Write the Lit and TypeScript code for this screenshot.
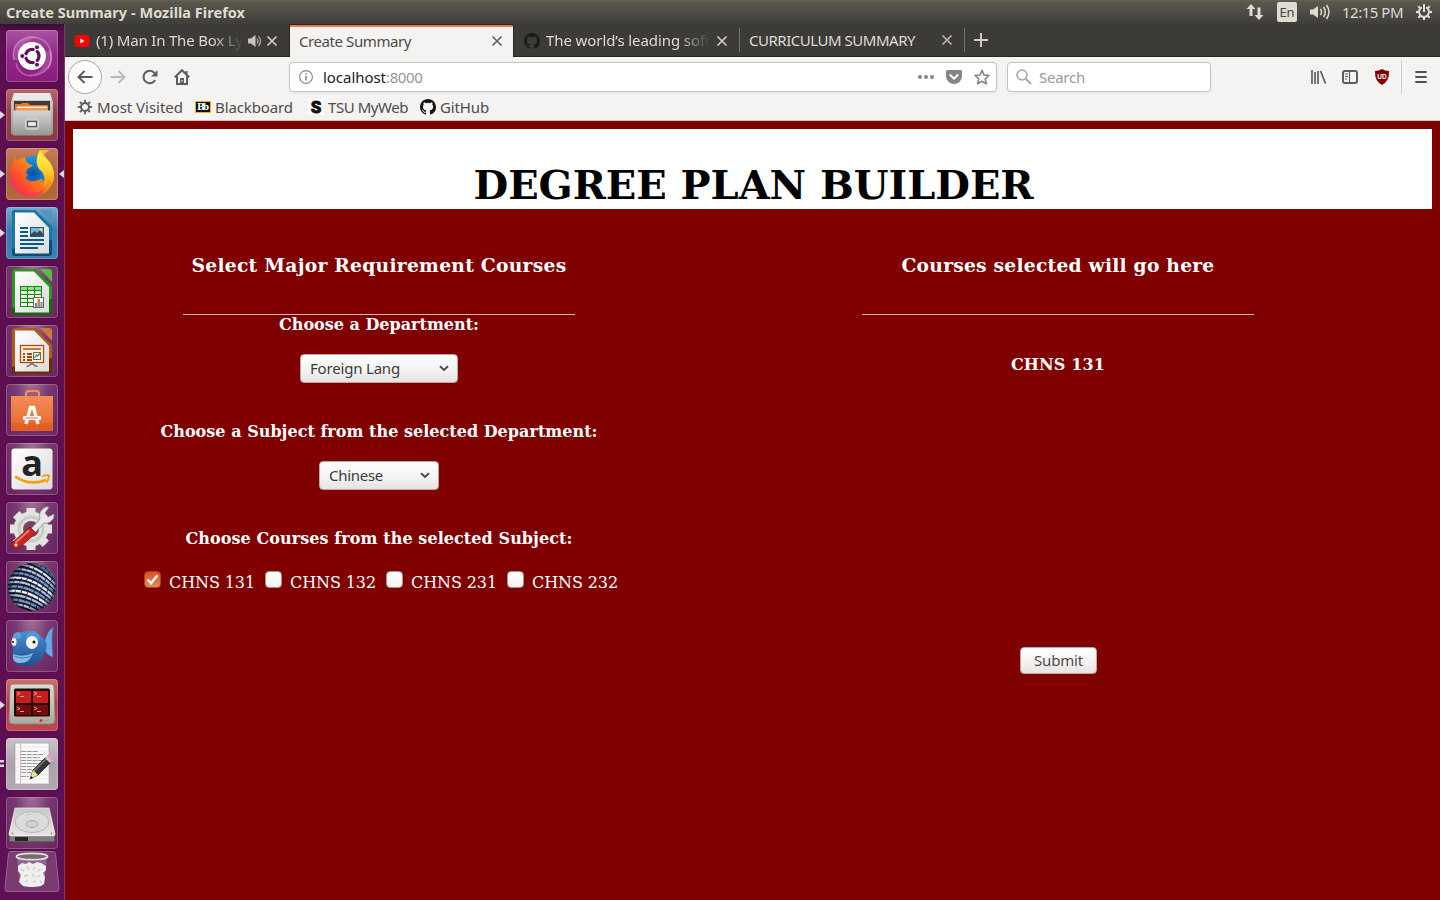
import { LitElement, html, svg, css } from "lit";
import { customElement, property } from "lit/decorators.js";

/* One line of text whose tracking is computed so that it fills a given width. */
@customElement("fit-text")
class FitText extends LitElement {
  @property({ type: Number }) w = 0;
  @property() text = "";
  static styles = css`
    :host { display: inline-block; white-space: pre; }
    .run { display: inline-block; }
  `;
  firstUpdated() {
    const run = this.renderRoot.querySelector(".run") as HTMLElement;
    const natural = run.getBoundingClientRect().width;
    run.style.letterSpacing = `${(this.w - natural) / this.text.length}px`;
  }
  render() {
    return html`<span class="run">${this.text}</span>`;
  }
}

const t = (text: string, w: number) => html`<fit-text .text=${text} .w=${w}></fit-text>`;

const octocat = (fill: string) => html`<svg width="16" height="16" viewBox="0 0 16 16"><path fill=${fill} d="M8 0C3.58 0 0 3.58 0 8c0 3.54 2.29 6.53 5.47 7.59.4.07.55-.17.55-.38 0-.19-.01-.82-.01-1.49-2.01.37-2.53-.49-2.69-.94-.09-.23-.48-.94-.82-1.13-.28-.15-.68-.52-.01-.53.63-.01 1.08.58 1.23.82.72 1.21 1.87.87 2.33.66.07-.52.28-.87.51-1.07-1.78-.2-3.64-.89-3.64-3.95 0-.87.31-1.59.82-2.15-.08-.2-.36-1.02.08-2.12 0 0 .67-.21 2.2.82a7.6 7.6 0 0 1 4 0c1.53-1.04 2.2-.82 2.2-.82.44 1.1.16 1.92.08 2.12.51.56.82 1.27.82 2.15 0 3.07-1.87 3.75-3.65 3.95.29.25.54.73.54 1.48 0 1.07-.01 1.93-.01 2.2 0 .21.15.46.55.38A8.01 8.01 0 0 0 16 8c0-4.42-3.58-8-8-8z"/></svg>`;
const close = (c: string) => html`<svg width="12" height="12" viewBox="0 0 12 12"><path d="M1.5 1.5l9 9M10.5 1.5l-9 9" stroke=${c} stroke-width="1.6" fill="none"/></svg>`;
const speaker = html`<svg width="14" height="14" viewBox="0 0 14 14"><path fill="#c9c5bd" d="M0 4.500h3L7.500 1v12L3 9.500H0z"/><path d="M9 4.500q1.800 2.500 0 5M10.500 2q4 5 0 10" stroke="#b9b5ad" stroke-width="1.200" fill="none"/></svg>`;

const spokes = (r: number, cx: number, cy: number, len: number, w: number, c: string) =>
  svg`${[0, 45, 90, 135, 180, 225, 270, 315].map(
    (a) => svg`<rect x=${cx - w / 2} y=${cy - r - len} width=${w} height=${len + 1} fill=${c} transform=${`rotate(${a} ${cx} ${cy})`} />`
  )}`;

const officeDoc = (c1: string, c2: string, corner: string, body: unknown) => svg`
  <path d="M9 3h20l17 17v26a3 3 0 0 1-3 3H9a3 3 0 0 1-3-3V6a3 3 0 0 1 3-3z" fill=${c2}/>
  <path d="M9 3h20l17 17v13L6 42V6a3 3 0 0 1 3-3z" fill=${c1}/>
  <path d="M9 5.500h19L43 21v25.500H9z" fill="url(#paper)"/>
  <path d="M34 3h9a3 3 0 0 1 3 3v10z" fill=${corner}/>
  ${body}`;

const icons = {
  dash: svg`
    <path d="M8 30C4 14 18 4 32 8C46 12 48 28 42 38" stroke="#dba3d3" stroke-opacity=".55" stroke-width="1.500" fill="none"/>
    <path d="M44 20C50 38 34 48 20 45C14 43 11 38 10 33" stroke="#dba3d3" stroke-opacity=".45" stroke-width="1.500" fill="none"/>
    <path d="M8 30C4 14 18 4 32 8C22 8 12 16 14 30zM44 20C50 38 34 48 20 45C32 45 42 36 40 22z" fill="#fff" fill-opacity=".16"/>
    <circle cx="26" cy="26" r="14" fill="#fff"/>
    <circle cx="26.300" cy="26" r="6.700" fill="none" stroke="#641255" stroke-width="3.300"/>
    <path d="M26 26L15.500 26M26 26L31.500 16.500M26 26L31.500 35.500" stroke="#fff" stroke-width="1.500"/>
    <circle cx="26.300" cy="26" r="4.900" fill="#fff"/>
    <g fill="#641255" stroke="#fff" stroke-width="1"><circle cx="16.300" cy="26" r="2.500"/><circle cx="31" cy="17.300" r="2.500"/><circle cx="31" cy="34.700" r="2.500"/></g>`,
  files: svg`
    <path d="M8 4h36l3 9v32H5V13z" fill="url(#metal)"/>
    <path d="M8 4h36l2 7H6z" fill="#e9e9e7"/>
    <rect x="8" y="12" width="36" height="14" fill="#3e3b38"/>
    <path d="M9 15h6l1-1h6l2 2h18v7H9z" fill="#e3792f"/><path d="M11 17.500h30v4H11z" fill="#fff0dc"/><path d="M10 19h32v4H10z" fill="#ef974e"/>
    <path d="M7 21.500h38v25H7z" fill="url(#metal)"/>
    <rect x="19.500" y="30" width="13" height="10" rx="2" fill="#bbb" stroke="#dedede"/>
    <rect x="21.500" y="32.500" width="9" height="5" fill="#eee" stroke="#5b5b5b" stroke-width="1.300"/>`,
  firefox: svg`
    <circle cx="27" cy="26" r="18" fill="url(#ffblue)"/>
    <path d="M34 2c3 4 4 6 7 9c7 7 9 17 5 25C41 46 32 49 25 49C12 48 4 39 4 27C4 20 6 14 9 8c0 3 1 4 2 5c3-3 6-4 8-4c0 3 1 5 4 7l4 1c-2 3-6 3-6 5c-2 2-1 4 1 5c-4 2-2 5 2 6c5 1 8-1 11-2c2 0 2 2-1 3c4 0 8-4 8-9c0-6-5-7-6-12c0-5 4-9 8-11z" fill="url(#fffire)"/>
    <path d="M34 2c3 4 4 6 7 9c7 7 9 17 5 25c-1-2-2-4-4-5c0 3-1 6-4 8c2-8 0-14-4-17c-4-4-5-11 0-20z" fill="url(#ffyellow)"/>
    <path d="M4 27c2 10 8 16 17 18c7 1 14-1 18-6c-2 8-9 11-14 10C12 48 4 39 4 27z" fill="#f5326c" fill-opacity=".55"/>`,
  writer: officeDoc("#1777ab", "#084c78", "#5294bb", svg`
    <g fill="#075c8c"><path d="M14 20h8v2h-8zM14 24h8v2h-8zM14 28h8v2h-8zM14 32h24v2H14zM14 36h24v2H14zM14 40h18v2H14z"/></g>
    <rect x="24.500" y="20.500" width="13" height="9" fill="#78b9dc" stroke="#075c8c"/><path d="M25 29v-2l4-3l2 2l3-3l3 4v2z" fill="#34495a"/><circle cx="35" cy="22.500" r="1.500" fill="#ffd24a"/>`),
  calc: officeDoc("#2b9a1c", "#0d6c0c", "#58bd45", svg`
    <rect x="14.500" y="20.500" width="21" height="20" fill="#e7f9df" stroke="#128b12"/><rect x="15" y="21" width="20" height="4" fill="#94df85"/>
    <path d="M21.500 20v20M28.500 20v20M15 24.500h20M15 28.500h20M15 32.500h20M15 36.500h20" stroke="#128b12" fill="none"/>
    <rect x="27.500" y="31.500" width="10" height="10" fill="#fff" stroke="#666"/><path d="M29 37h2v4h-2z" fill="#3798d4"/><path d="M31.500 33h2.500v8h-2.500z" fill="#e87926"/><path d="M34.500 36h2v5h-2z" fill="#3798d4"/>`),
  impress: officeDoc("#b55a1c", "#6e2d06", "#c8793c", svg`
    <rect x="14.500" y="20.500" width="23" height="17" fill="#fff1e4" stroke="#b14b12" stroke-width="1.300"/>
    <path d="M17 23h18v2H17z" fill="#d9722e"/><path d="M17 28h2v2h-2zM17 31h2v2h-2zM17 34h2v2h-2zM21 28h5v2h-5zM21 31h5v2h-5zM21 34h5v2h-5z" fill="#a44412"/>
    <rect x="27.500" y="27.500" width="7" height="7" fill="#fff" stroke="#666"/><path d="M28.500 33l2-3l1 1l3-3" stroke="#329d29" fill="none" stroke-width="1.300"/>
    <path d="M26 38v1M24.500 39.500q-1.500 1.500-4 2M27.500 39.500q1.500 1.500 4 2M24 39h4" stroke="#777" stroke-width="1.700" fill="none"/>`),
  software: svg`
    <path d="M20 17V9q0-3 3-3h7q3 0 3 3v8" stroke="#b85a38" stroke-width="2.600" fill="none"/>
    <path d="M5 12h42v35H5z" fill="url(#bag)"/><path d="M5 39h42v8H5z" fill="#dc5a1c" fill-opacity=".55"/>
    <path d="M20 17V10q0-3 3-3h7q3 0 3 3v7" stroke="#f1936a" stroke-width="2" fill="none"/>
    <g stroke="#fff" stroke-width="3.300" fill="none"><path d="M20 40l4.500-16.500h3L32 40"/></g>
    <rect x="17" y="32" width="18" height="4" rx="1" fill="#fff"/><path d="M19 34h13" stroke="#ee713b" stroke-width="1"/>`,
  amazon: svg`
    <rect x="5.500" y="5.500" width="41" height="41" rx="3" fill="url(#paper)"/>
    <text x="26" y="33" text-anchor="middle" class="amz">a</text>
    <path d="M9 33.500q15 10 31 3.500" stroke="#f90" stroke-width="2.600" fill="none"/><path d="M36 33.500q5-2 7-1q0 4-2.500 7" stroke="#f90" stroke-width="1.800" fill="none"/>`,
  settings: svg`
    ${spokes(16, 25, 27, 5, 9, "#e3e3e1")}
    <circle cx="25" cy="27" r="17.500" fill="#e3e3e1"/><circle cx="25" cy="27" r="12" fill="none" stroke="#cacac8" stroke-width="3"/>
    <circle cx="25" cy="27" r="8" fill="#744467"/>
    <path d="M22 30L34 17q-2-7 4-11q3-2 5-1l-4 6l3 4l6-3q1 5-4 8q-3 2-6 1L26 34z" fill="#e8e8e8" stroke="#8d8d8b" stroke-width=".800"/>
    <path d="M24 25l6 6L13 46q-4 2-6-1q-2-2 0-5z" fill="#c82424" stroke="#8b1414" stroke-width=".800"/><path d="M23 28.500L9.500 40.500" stroke="#ef7773" stroke-width="2"/><circle cx="10" cy="43" r="1.400" fill="#fff"/>`,
  sphere: svg`
    <clipPath id="ball"><circle cx="26" cy="26" r="24"/></clipPath>
    <circle cx="26" cy="26" r="24" fill="#131a2b"/>
    <g clip-path="url(#ball)" fill="none">
      ${[0, 1, 2, 3, 4, 5, 6, 7, 8, 9, 10, 11, 12].map((i) => svg`<path d=${`M-4 ${2 + i * 4.2}Q${28 - i * 1.2} ${-10 + i * 4.9} ${56 - i * 1.4} ${26 + i * 3.1}`} stroke=${["#7f9ad0", "#f2f6ff", "#b9c9e6"][i % 3]} stroke-width="2.300"/>`)}
      ${[0, 1, 2, 3, 4].map((i) => svg`<path d=${`M${24 + i * 6} ${-1 + i}Q${46 + i * 2} ${8 + i * 3} ${54 + i} ${22 + i * 4}`} stroke=${i % 2 ? "#6f8cc6" : "#dbe6fb"} stroke-width="1.600"/>`)}
      ${[0, 1, 2, 3, 4, 5, 6, 7, 8].map((i) => svg`<path d=${`M${-6 + i * 7} 54Q${4 + i * 6} 20 ${24 + i * 6} -4`} stroke="#141c30" stroke-width=".900" stroke-dasharray="5 2"/>`)}
    </g><circle cx="26" cy="26" r="24" fill="url(#shade)"/>`,
  fish: svg`
    <path d="M38 24q3-13 9-17q-1 7-1 13q0 9 1 17q-6-1-9-9z" fill="#6ca8df" stroke="#367abc" stroke-width=".600"/>
    <path d="M7 24Q11 10 24 11q11 1 17 13q-2 15-12 20q-12 5-20-1q-3-3-2-10z" fill="url(#fishbody)"/>
    <path d="M6 20q1-9 7-8q3 1 2 6z" fill="#5d9bd5"/><ellipse cx="8" cy="22" rx="2.500" ry="4" fill="#eee"/><circle cx="7" cy="22" r="1" fill="#111"/>
    <circle cx="26.500" cy="18" r="7" fill="#5796d4"/><ellipse cx="26" cy="22.500" rx="6" ry="6.500" fill="#f5f4ef"/><circle cx="28" cy="22" r="1.500" fill="#111"/>
    <path d="M7 34q10 4 20-1q-3 10-13 10q-6 0-7-5z" fill="#88b8e3"/><path d="M8 36q9 4 17 0" stroke="#4481bb" fill="none"/>`,
  terminator: svg`
    <path d="M7 5h38q3 0 3 3l1 33q0 4-4 4H7q-4 0-4-4L4 8q0-3 3-3z" fill="url(#bezel)" stroke="#85857d"/>
    <rect x="8" y="9.500" width="36" height="28" rx="1.500" fill="#220605"/>
    <path d="M10 12h15v12H10zM27 12h15v12H27z" fill="#ca1d20"/><path d="M10 26h15v10H10zM27 26h15v10H27z" fill="#760b0d"/>
    <g stroke="#fbb" fill="none" stroke-width=".800"><path d="M11 13l3 1.500l-3 1.500M14 17.500h4M28 13l3 1.500l-3 1.500M31 17.500h4M11 28l3 1.500l-3 1.500M14 32.500h4M28 28l3 1.500l-3 1.500M31 32.500h4"/></g>
    <circle cx="35" cy="41.500" r="1.500" fill="#e22"/><path d="M38 41.500h4" stroke="#999"/>`,
  gedit: svg`
    <path d="M9 5h34v41H9z" fill="#fafaf8" stroke="#aaa" stroke-width=".800"/><path d="M14.500 5v41" stroke="#f1aaa9"/><path d="M10 9h32M10 13h32M10 17h32M10 21h32M10 25h32M10 29h32M10 33h32M10 37h32M10 41h32" stroke="#dce6f0" stroke-width=".800"/>
    <path d="M15 13.500h17M15 16.500h22M15 19.500h19M15 22.500h22M15 25.500h20M15 28.500h14M15 31.500h15M15 34.500h10M15 38.500h8" stroke="#9a9a9a" stroke-width="1" stroke-dasharray="5 .8"/>
    <path d="M24 41l3-9l13-13l5 5L32 37z" fill="#36383b" stroke="#151515" stroke-width=".700"/><path d="M28 33L41 20" stroke="#777" stroke-width="1.500"/>
    <path d="M24 41l3-9l5 5z" fill="#f1de8d"/><path d="M24 41l1-3l2 2z" fill="#111"/><path d="M39 20l3-3l5 5l-3 3z" fill="#ccc"/><path d="M41 18q3-3 5 0q3 2 0 5z" fill="#e696c5"/>`,
  disk: svg`
    <path d="M9 11h34l6 26v7q0 1-1 1H4q-1 0-1-1v-7z" fill="#5d5f5c"/><path d="M9 11h34l6 26q0 2-2 2H5q-2 0-2-2z" fill="url(#metal2)" stroke="#f5f5f3" stroke-width=".700"/>
    <ellipse cx="26" cy="25" rx="17" ry="10.500" fill="#dcdcda" stroke="#b5b5b3"/><ellipse cx="26" cy="27" rx="6" ry="3.500" fill="#d1d1cf" stroke="#aaa"/><path d="M20 18q8-1 10-5" stroke="#c4c4c2" fill="none"/>
    <path d="M4 40h44v4H4z" fill="#7e807d"/><path d="M9 40h13v4H9z" fill="#252726"/><g fill="#888"><circle cx="6.500" cy="36.500" r=".9"/><circle cx="45.500" cy="36.500" r=".9"/></g>`,
};

/* Gradients are repeated in every tile so that each icon resolves its own fills. */
const tileDefs = svg`<defs>
  <linearGradient id="paper" x2="1" y2="1"><stop stop-color="#fff"/><stop offset="1" stop-color="#dadada"/></linearGradient>
  <linearGradient id="metal" x2="0" y2="1"><stop stop-color="#d5d5d3"/><stop offset="1" stop-color="#969694"/></linearGradient>
  <linearGradient id="metal2" x2="0" y2="1"><stop stop-color="#c8c8c6"/><stop offset="1" stop-color="#e6e6e4"/></linearGradient>
  <linearGradient id="bezel" x2="0" y2="1"><stop stop-color="#dddcd4"/><stop offset="1" stop-color="#aaa99f"/></linearGradient>
  <linearGradient id="bag" x2="0" y2="1"><stop stop-color="#f28d58"/><stop offset="1" stop-color="#e9652a"/></linearGradient>
  <radialGradient id="ffblue"><stop stop-color="#0a4f9f"/><stop offset=".6" stop-color="#1482cf"/><stop offset="1" stop-color="#1c97e0"/></radialGradient>
  <linearGradient id="fffire" x1="1" y1="0" x2="0" y2=".9"><stop stop-color="#ffd02b"/><stop offset=".45" stop-color="#ff8b16"/><stop offset=".8" stop-color="#fb4232"/><stop offset="1" stop-color="#e5287c"/></linearGradient>
  <linearGradient id="ffyellow" x2="0" y2="1"><stop stop-color="#fff44f"/><stop offset=".5" stop-color="#ffd52f"/><stop offset="1" stop-color="#ff980e"/></linearGradient>
  <linearGradient id="fishbody" x2="0" y2="1"><stop stop-color="#4c8fd0"/><stop offset="1" stop-color="#1b4f91"/></linearGradient>
  <radialGradient id="shade"><stop stop-color="#fff" stop-opacity="0"/><stop offset=".8" stop-color="#102040" stop-opacity=".1"/><stop offset="1" stop-color="#050a18" stop-opacity=".65"/></radialGradient>
</defs>`;

const tiles: [string, unknown, string][] = [
  ["dash", icons.dash, ""],
  ["red", icons.files, "l"],
  ["orange", icons.firefox, "lr"],
  ["blue", icons.writer, "l"],
  ["plain", icons.calc, ""],
  ["plain", icons.impress, ""],
  ["plain", icons.software, ""],
  ["plain", icons.amazon, ""],
  ["plain", icons.settings, ""],
  ["plain", icons.sphere, ""],
  ["plain", icons.fish, ""],
  ["crimson", icons.terminator, "l"],
  ["grey", icons.gedit, "d"],
  ["plain", icons.disk, ""],
];

@customElement("unity-launcher")
class UnityLauncher extends LitElement {
  static styles = css`
    :host { display: flex; flex-direction: column; gap: 7px; width: 64px; box-sizing: content-box; border-right: 1px solid #7d3b73; padding-top: 6px; background: linear-gradient(#390a33 0, #5c0e50 8px, #5f1054 100%); overflow: hidden; }
    .row { display: grid; grid-template-columns: 6px 52px 6px; height: 52px; flex: none; align-items: center; }
    .tile { box-sizing: border-box; width: 52px; height: 52px; border-radius: 4px; box-shadow: inset 0 0 0 1px rgba(255, 255, 255, .22), 0 0 2px rgba(0, 0, 0, .25); }
    .tile svg { display: block; overflow: visible; }
    .dash { background: linear-gradient(#a8559f, #942889 45%, #8a1c7c); }
    .plain { background: radial-gradient(ellipse at 50% -10%, #a57a9b 0, #7a3a70 45%, #69215f 100%); }
    .red { background: linear-gradient(#b7666a, #95404a 45%, #8b3a47); }
    .orange { background: linear-gradient(#c47f5a, #ad623b 50%, #b2693d); }
    .blue { background: linear-gradient(#76a9cc, #3c7cae 45%, #3f80b2); }
    .crimson { background: linear-gradient(#d16d6d, #b83a40 50%, #c04648); }
    .grey { background: linear-gradient(#cac3ca, #ada1ac 50%, #b5aab4); }
    .amz { font: bold 36px/36px "Open Sans", "Noto Sans", sans-serif; fill: #232323; }
    .mark { display: block; fill: #ddd8de; }
    .trash { margin-top: -5px; display: block; flex: none; }
  `;
  render() {
    return html`${tiles.map(
        ([kind, icon, marks]) => html`<div class="row">
          <svg class="mark" width="6" height="10" viewBox="0 0 6 10">
            ${marks.includes("l") ? svg`<path d="M0 1l5 4l-5 4z"/>` : ""}
            ${marks === "d" ? svg`<path d="M0 1h4v2.500H0zM0 5.500h4V8H0z"/>` : ""}
          </svg>
          <div class="tile ${kind}"><svg width="52" height="52" viewBox="0 0 52 52">${tileDefs}${icon}</svg></div>
          <svg class="mark" width="6" height="10" viewBox="0 0 6 10">${marks.includes("r") ? svg`<path d="M6 1l-5 4l5 4z"/>` : ""}</svg>
        </div>`
      )}
      <svg class="trash" width="64" height="44" viewBox="0 0 64 44">
        <path d="M11 .500h42q2 0 2.500 2l3.500 35q0 3-2 3H7q-2.500 0-2-3l3.500-35Q9 .500 11 .500z" fill="#793b70" stroke="#97628f"/>
        <path d="M17 6l3 27q12 5 24 0l3-27z" fill="#bbb6bc" fill-opacity=".35"/>
        <path d="M18 15l4-3l4 1l3-2l4 2l4-2l4 1l5 3l0 4l-3 3l2 4l-1 7l-3 2q-9 2-18 0l-4-4l2-7l-3-4z" fill="#f0efee"/>
        <path d="M21 18l3 2M27 15l2 4M35 16l-2 3M41 18l-3 2M24 25l4-1M32 23l3 3M40 25l-3 1M25 31l3-2M33 31l3-1M40 30l2 2" stroke="#c9c8c7" stroke-width="1.300" fill="none"/>
        <ellipse cx="32" cy="5.500" rx="15.500" ry="3.200" fill="#77696f" stroke="#dededd" stroke-width="1.800"/>
      </svg>`;
  }
}

@customElement("firefox-chrome")
class FirefoxChrome extends LitElement {
  static styles = css`
    :host { display: block; font: 15px/20px "Noto Sans", sans-serif; color: #4c4c4c; }
    svg { display: block; flex: none; }
    .tabs { display: grid; grid-template-columns: 224px 225px 225px 225px 1fr; height: 33px; box-sizing: border-box; background: #3c3b37; color: #dfdbd2; }
    .tab { display: flex; align-items: center; height: 33px; box-sizing: border-box; border-bottom: 1px solid #272623; padding: 2px 11px 1px 9px; overflow: hidden; }
    .tab .close { margin-left: auto; }
    .clip { overflow: hidden; height: 21px; margin-top: -1px; -webkit-mask-image: linear-gradient(90deg, #000 calc(100% - 32px), transparent); }
    .active { background: #f4f3f2; color: #4c4c4c; border: 1px solid #272623; border-bottom: 0; box-shadow: inset 0 2px #f0774a; padding: 0 10px 1px 9px; }
    .clip1 { width: 148px; margin-left: 6px; margin-right: 4px; }
    .clip2 { width: 164px; margin-left: 6px; }
    .sep { width: 1px; height: 24px; background: #75736d; }
    .third { padding-left: 10px; }
    .fourth { padding-left: 0; padding-top: 0; }
    .fourth fit-text { margin-left: 9px; }
    .new { padding-left: 0; padding-top: 0; }
    .plus { margin-left: 8px; }
    .nav { display: grid; grid-template-columns: 3px 34px 8px 16px 16px 16px 16px 16px 99px 708px 10px 204px 98px 18px 14px 18px 14px 18px 10px 1px 12px 1fr; align-items: center; height: 39px; background: #f4f3f2; padding-top: 1px; box-sizing: border-box; }
    .back { box-sizing: border-box; width: 34px; height: 34px; border: 1px solid #aaa8a6; border-radius: 50%; background: #fcfcfc; display: grid; place-items: center; }
    .box { box-sizing: border-box; height: 30px; border: 1px solid #c6c3c0; border-radius: 4px; background: #fff; display: flex; align-items: center; box-shadow: 0 1px 3px rgba(0, 0, 0, .06); }
    .url { padding: 0 6px 0 9px; color: #222; }
    .url .host { margin-left: 10px; }
    .url .port { color: #959595; }
    .url .dots { margin-left: auto; margin-right: 12px; }
    .url .pocket { margin-right: 12px; }
    .search { padding-left: 8px; gap: 7px; color: #9a9a9a; }
    .rule { width: 1px; height: 34px; background: #d4d2d0; }
    .marks { display: flex; align-items: center; height: 25px; box-sizing: border-box; border-bottom: 1px solid #c9c6c3; background: #f4f3f2; padding: 0 0 2px 12px; }
    .marks svg { margin-right: 4px; }
    .marks .m2 { margin-left: 12px; }
    .marks .m3 { margin-left: 15px; overflow: visible; }
    .tiny { font: bold 9px "DejaVu Serif", serif; fill: #fff; }
    .ess { font: 900 17px Roboto, sans-serif; fill: #111; stroke: #111; stroke-width: .8px; }
    .ud { font: bold 6.5px "Liberation Sans", sans-serif; fill: #fff; }
  `;
  render() {
    return html`
      <div class="tabs">
        <div class="tab first">
          <svg width="16" height="12" viewBox="0 0 16 12"><rect x=".500" width="15" height="12" rx="3" fill="#f00"/><path d="M6.300 3.500v5l4.200-2.500z" fill="#fff"/></svg>
          <div class="clip clip1">${t("(1) Man In The Box Lyr", 153)}</div>
          ${speaker}
          <span class="close">${close("#d5d1c9")}</span>
        </div>
        <div class="tab active">${t("Create Summary", 112)}<span class="close">${close("#5d5d5d")}</span></div>
        <div class="tab third">${octocat("#1c1b19")}<div class="clip clip2">${t("The world’s leading softw", 176)}</div><span class="close">${close("#d5d1c9")}</span></div>
        <div class="tab fourth"><div class="sep"></div>${t("CURRICULUM SUMMARY", 166)}<span class="close">${close("#bdb9b2")}</span></div>
        <div class="tab new"><div class="sep"></div><svg class="plus" width="16" height="16" viewBox="0 0 16 16"><path d="M8 1v14M1 8h14" stroke="#d5d1c9" stroke-width="1.900"/></svg></div>
      </div>
      <div class="nav">
        <i></i>
        <div class="back"><svg width="16" height="16" viewBox="0 0 16 16"><path d="M15.500 8H1.500M7.500 2L1.500 8L7.500 14" stroke="#585858" stroke-width="1.900" fill="none"/></svg></div>
        <i></i>
        <svg width="16" height="16" viewBox="0 0 16 16"><path d="M.500 8H14.500M8.500 2L14.500 8L8.500 14" stroke="#bcbab9" stroke-width="1.900" fill="none"/></svg>
        <i></i>
        <svg width="16" height="16" viewBox="0 0 16 16"><path d="M13.200 11A6.200 6.200 0 1 1 12.500 4" stroke="#5e5e5e" stroke-width="2" fill="none"/><path d="M15.500 1v6.500H9z" fill="#5e5e5e"/></svg>
        <i></i>
        <svg width="16" height="16" viewBox="0 0 16 16"><path d="M.800 8.200L8 1.200l7.200 7M3 7v8h10V7M12.500 2v3" stroke="#5e5e5e" stroke-width="2" fill="none"/><path d="M6 9h4v6H6z" fill="#5e5e5e"/><path d="M7.500 11h1v2h-1z" fill="#f4f3f2"/></svg>
        <i></i>
        <div class="box url">
          <svg width="14" height="14" viewBox="0 0 14 14"><circle cx="7" cy="7" r="6.400" fill="none" stroke="#858585" stroke-width="1.100"/><path d="M6.200 6h1.600v4.500H6.200zM6.200 3.200h1.600v1.600H6.200z" fill="#858585"/></svg>
          <span class="host">${t("localhost", 63)}</span><span class="port">${t(":8000", 36.5)}</span>
          <svg class="dots" width="16" height="16" viewBox="0 0 16 16"><g fill="#858585"><circle cx="2" cy="8" r="2"/><circle cx="8" cy="8" r="2"/><circle cx="14" cy="8" r="2"/></g></svg>
          <svg class="pocket" width="16" height="16" viewBox="0 0 16 16"><path d="M1.500 1h13Q16 1 16 2.500V7A8 8 0 0 1 0 7V2.500Q0 1 1.500 1z" fill="#858585"/><path d="M4.300 6L8 9.600L11.700 6" stroke="#fff" stroke-width="2" stroke-linecap="round" fill="none"/></svg>
          <svg width="16" height="16" viewBox="0 0 16 16"><path d="M8 1.300l2 4.700l5 .500l-3.800 3.300l1.200 5L8 12.200l-4.400 2.600l1.200-5L1 6.500l5-.500z" fill="none" stroke="#858585" stroke-width="1.600" stroke-linejoin="round"/></svg>
        </div>
        <i></i>
        <div class="box search"><svg width="16" height="16" viewBox="0 0 16 16"><circle cx="6" cy="6" r="4.900" fill="none" stroke="#aaa" stroke-width="1.800"/><path d="M9.500 9.500L15 15" stroke="#aaa" stroke-width="2.200"/></svg>${t("Search", 46)}</div>
        <i></i>
        <svg width="18" height="16" viewBox="0 0 18 16"><path d="M3 1v14M6 3v12M9 2v13M11.500 2l5 12.500" stroke="#5e5e5e" stroke-width="1.700" fill="none"/></svg>
        <i></i>
        <svg width="18" height="16" viewBox="0 0 18 16"><rect x="2" y="2" width="14" height="12" rx="2" fill="none" stroke="#5e5e5e" stroke-width="2"/><path d="M8.500 2v12M4 5h3M4 7.500h3M4 10h2" stroke="#5e5e5e" stroke-width="1.100"/></svg>
        <i></i>
        <svg width="18" height="16" viewBox="0 0 18 16"><path d="M9 0q3 2 7 2q.500 10-7 14Q1.500 12 2 2q4 0 7-2z" fill="#800000"/><text class="ud" x="9" y="9.500" text-anchor="middle">UD</text></svg>
        <i></i>
        <div class="rule"></div>
        <i></i>
        <svg width="14" height="14" viewBox="0 0 14 14"><path d="M2 2h10M2 7h10M2 12h10" stroke="#4e4e4e" stroke-width="1.800" stroke-linecap="round"/></svg>
      </div>
      <div class="marks">
        <svg width="16" height="16" viewBox="0 0 16 16">${spokes(4, 8, 8, 3.2, 1.8, "#5e5e5e")}<circle cx="8" cy="8" r="4" fill="none" stroke="#5e5e5e" stroke-width="1.900"/></svg>${t("Most Visited", 86)}
        <svg class="m2" width="16" height="16" viewBox="0 0 16 16"><rect x=".500" y="2.500" width="15" height="11" fill="#111" stroke="#e7b32a"/><text class="tiny" x="8" y="11.300" text-anchor="middle" textLength="12">Bb</text></svg>${t("Blackboard", 78)}
        <svg class="m3" width="16" height="16" viewBox="0 0 16 16"><rect width="16" height="16" fill="#fff"/><text class="ess" x="8" y="14" text-anchor="middle">S</text></svg>${t("TSU MyWeb", 80)}
        <span class="m2">${octocat("#161514")}</span>${t("GitHub", 49)}
      </div>`;
  }
}

@customElement("degree-plan")
class DegreePlan extends LitElement {
  static styles = css`
    :host { display: block; background: #800000; color: #fff; padding: 8px; font: 16px/19px "DejaVu Serif", serif; box-sizing: border-box; }
    .banner { background: #fff; color: #000; height: 80px; padding-top: 32px; padding-left: 2px; box-sizing: border-box; text-align: center; }
    h1 { margin: 0; font-size: 40px; line-height: 47px; }
    .cols { display: grid; grid-template-columns: 612px 612px; column-gap: 67px; }
    .col { display: flex; flex-direction: column; align-items: center; padding-top: 45px; }
    h3 { margin: 0 0 38px; font-size: 18.72px; line-height: 22px; }
    .rule { width: 392px; height: 1px; background: #d8b9b0; }
    .label { font-weight: bold; height: 19px; }
    .select { display: flex; justify-content: space-between; align-items: center; box-sizing: border-box; height: 29px; margin: 20px 0 39px; padding: 0 8px 2px 9px; border: 1px solid #b8a9a5; border-radius: 4px; background: linear-gradient(#fff, #f3f2f1 60%, #e6e3e1); color: #3c3c3c; font: 15px/20px "Noto Sans", sans-serif; }
    .select svg { margin-top: 2px; }
    .dept { width: 158px; }
    .subj { width: 120px; }
    .courses { display: flex; gap: 10px; margin-top: 23px; padding-left: 4px; }
    .course { display: flex; width: 111px; gap: 8px; height: 22px; }
    .course .name { padding-top: 2px; white-space: nowrap; }
    .check { box-sizing: border-box; width: 17px; height: 17px; border: 1px solid #a9938f; border-radius: 4px; background: linear-gradient(#fff, #f4f2f1); flex: none; }
    .on { background: linear-gradient(#d9541e, #e5895f); border-color: #a3431f; }
    .check svg { display: block; }
    .picked { font-weight: bold; margin-top: 40px; }
    .submit { display: grid; place-items: center; box-sizing: border-box; width: 77px; height: 27px; margin-top: 273px; padding-bottom: 2px; padding-left: 1px; border: 1px solid #b8a9a5; border-radius: 4px; background: linear-gradient(#fff, #f3f2f1 60%, #e6e3e1); color: #4c4c4c; font: 15px/20px "Noto Sans", sans-serif; }
  `;
  render() {
    const chevron = html`<svg width="10" height="7" viewBox="0 0 10 7"><path d="M1 1.200L5 5L9 1.200" stroke="#4a4a4a" stroke-width="1.900" fill="none"/></svg>`;
    return html`
      <div class="banner"><h1>${t("DEGREE PLAN BUILDER", 560)}</h1></div>
      <div class="cols">
        <div class="col">
          <h3>${t("Select Major Requirement Courses", 375)}</h3>
          <div class="rule"></div>
          <div class="label">${t("Choose a Department:", 200)}</div>
          <div class="select dept">${t("Foreign Lang", 90)}${chevron}</div>
          <div class="label">${t("Choose a Subject from the selected Department:", 437)}</div>
          <div class="select subj">${t("Chinese", 54)}${chevron}</div>
          <div class="label">${t("Choose Courses from the selected Subject:", 387)}</div>
          <div class="courses">
            ${["CHNS 131", "CHNS 132", "CHNS 231", "CHNS 232"].map(
              (name, i) => html`<div class="course">
                <div class="check ${i === 0 ? "on" : ""}">${i === 0 ? html`<svg width="15" height="15" viewBox="0 0 15 15"><path d="M2.500 7.500l3.500 3.700l6.500-8" stroke="#fff" stroke-width="2.400" fill="none"/></svg>` : ""}</div>
                <div class="name">${t(name, 86)}</div>
              </div>`
            )}
          </div>
        </div>
        <div class="col">
          <h3>${t("Courses selected will go here", 313)}</h3>
          <div class="rule"></div>
          <div class="picked">${t("CHNS 131", 94)}</div>
          <div class="submit">${t("Submit", 49)}</div>
        </div>
      </div>`;
  }
}

@customElement("app-root")
class AppRoot extends LitElement {
  static styles = css`
    :host { display: grid; grid-template: 24px 876px / 65px 1375px; width: 1440px; height: 900px; overflow: hidden; background: #800000; }
    .panel { grid-column: 1 / 3; display: flex; align-items: center; box-sizing: border-box; padding: 0 8px 0 6px; background: linear-gradient(#66624f 0, #5a574d 2px, #3f3e39 100%); color: #dfdbd2; font: 15px/20px "Noto Sans", sans-serif; }
    .title { font-weight: bold; font-size: 14.5px; margin-top: -1px; }
    svg { display: block; }
    .tray { margin-left: auto; display: flex; align-items: center; }
    .lang { display: grid; place-items: center; width: 20px; height: 20px; margin: 0 12px 0 13px; border-radius: 2px; background: #dfdbd2; color: #46443f; font-size: 13px; }
    .vol { margin-right: 12px; }
    .clock { margin-right: 13px; margin-top: -1px; }
    .window { display: grid; grid-template-rows: 97px 779px; }
  `;
  render() {
    return html`
      <div class="panel">
        <span class="title">${t("Create Summary - Mozilla Firefox", 239)}</span>
        <div class="tray">
          <svg width="18" height="18" viewBox="0 0 18 18"><path d="M5 1L.500 6H3.500v7h3V6h3zM13 17l4.500-5H14.500V4.500h-3V12h-3z" fill="#dfdbd2"/></svg>
          <span class="lang">${t("En", 15)}</span>
          <svg class="vol" width="21" height="18" viewBox="0 0 21 18"><path d="M1 6.500h3L9 3v12l-5-3.500H1z" fill="#dfdbd2"/><path d="M11.500 6q2 3 0 6M14.500 4q3.500 5 0 10M17.500 2q5 7 0 14" stroke="#dfdbd2" stroke-width="1.500" fill="none"/></svg>
          <span class="clock">${t("12:15 PM", 61)}</span>
          <svg width="16" height="16" viewBox="0 0 16 16">${[45, 90, 135, 180, 225, 270, 315].map((a) => svg`<rect x="6.900" y="0" width="2.200" height="3.500" fill="#dfdbd2" transform=${`rotate(${a} 8 8)`}/>`)}<path d="M5.800 3.400a5 5 0 1 0 4.400 0" stroke="#dfdbd2" stroke-width="2" fill="none"/><path d="M8 0v8" stroke="#dfdbd2" stroke-width="2"/></svg>
        </div>
      </div>
      <unity-launcher></unity-launcher>
      <div class="window">
        <firefox-chrome></firefox-chrome>
        <degree-plan></degree-plan>
      </div>`;
  }
}
